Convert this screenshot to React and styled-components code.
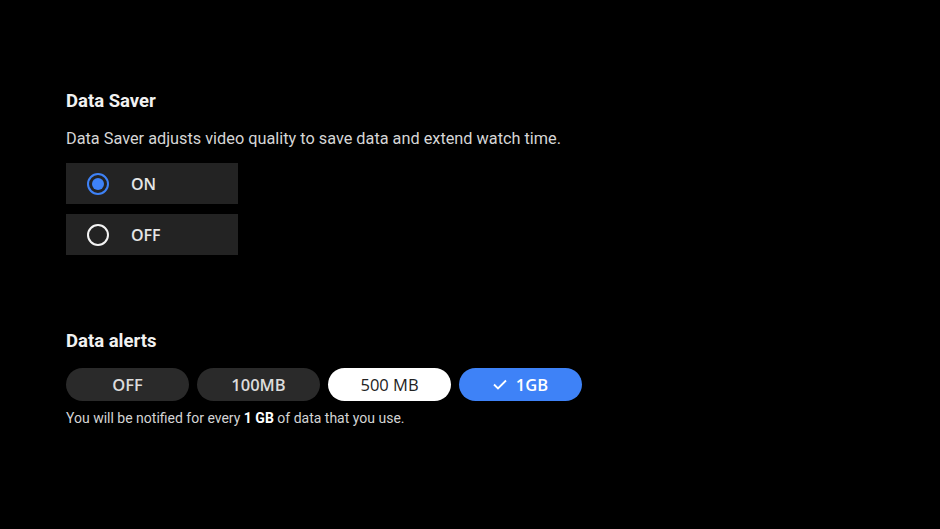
import React from 'react';
import styled, { createGlobalStyle } from 'styled-components';

const GlobalStyle = createGlobalStyle`
  html, body {
    margin: 0;
    padding: 0;
    background: #000;
  }
  body {
    font-family: Roboto, "Noto Sans", sans-serif;
    -webkit-font-smoothing: antialiased;
  }
`;

const Page = styled.div`
  width: 940px;
  height: 529px;
  background: #000;
  padding: 90px 0 0 66px;
  box-sizing: border-box;
  display: flex;
  flex-direction: column;
`;

const Section = styled.section`
  display: flex;
  flex-direction: column;
  margin-bottom: ${(p) => p.$gap || 0}px;
`;

const Title = styled.h2`
  margin: 0;
  font-family: Roboto, sans-serif;
  font-weight: 700;
  font-size: 18.5px;
  line-height: 22px;
  color: #f1f1f1;
`;

const Description = styled.p`
  margin: 17px 0 14px;
  font-size: 16.3px;
  line-height: 20px;
  color: #d6d6d6;
`;

const RadioList = styled.div`
  display: flex;
  flex-direction: column;
  gap: 10px;
`;

const RadioRow = styled.div`
  display: flex;
  align-items: center;
  width: 172px;
  height: 41px;
  background: #232323;
  padding-left: 21px;
  box-sizing: border-box;
`;

const RadioCircle = styled.span`
  width: 22px;
  height: 22px;
  border-radius: 50%;
  box-sizing: border-box;
  border: 2.5px solid ${(p) => (p.$checked ? '#3e82f7' : '#f4f4f4')};
  display: flex;
  align-items: center;
  justify-content: center;
  &::after {
    content: '';
    display: ${(p) => (p.$checked ? 'block' : 'none')};
    width: 12px;
    height: 12px;
    border-radius: 50%;
    background: #3e82f7;
  }
`;

const RadioLabel = styled.span`
  margin-left: 22px;
  font-family: "Open Sans", sans-serif;
  font-weight: 600;
  font-size: 16px;
  color: #e6e6e6;
`;

const PillRow = styled.div`
  display: flex;
  gap: 8px;
  margin-top: 16px;
`;

const Pill = styled.button`
  width: 123px;
  height: 33px;
  border: none;
  border-radius: 17px;
  padding: 0;
  display: flex;
  align-items: center;
  justify-content: center;
  gap: 9px;
  font-family: "Open Sans", sans-serif;
  font-size: 16.5px;
  font-weight: ${(p) => (p.$variant === 'light' ? 500 : 600)};
  background: ${(p) =>
    p.$variant === 'light' ? '#ffffff' : p.$variant === 'active' ? '#3e82f7' : '#2a2a2a'};
  color: ${(p) =>
    p.$variant === 'light' ? '#222' : p.$variant === 'active' ? '#fff' : '#dcdcdc'};
`;

const Note = styled.p`
  margin: 8px 0 0;
  font-size: 14px;
  line-height: 18px;
  color: #d4d4d4;
  b {
    color: #fff;
    font-weight: 700;
  }
`;

const radioItems = [
  { label: 'ON', checked: true },
  { label: 'OFF', checked: false },
];

const pills = [
  { label: 'OFF', variant: 'dark' },
  { label: '100MB', variant: 'dark' },
  { label: '500 MB', variant: 'light' },
  { label: '1GB', variant: 'active' },
];

export default function App() {
  return (
    <>
      <GlobalStyle />
      <Page>
        <Section $gap={75}>
          <Title>Data Saver</Title>
          <Description>Data Saver adjusts video quality to save data and extend watch time.</Description>
          <RadioList>
            {radioItems.map((item) => (
              <RadioRow key={item.label}>
                <RadioCircle $checked={item.checked} />
                <RadioLabel>{item.label}</RadioLabel>
              </RadioRow>
            ))}
          </RadioList>
        </Section>
        <Section>
          <Title>Data alerts</Title>
          <PillRow>
            {pills.map((p) => (
              <Pill key={p.label} $variant={p.variant}>
                {p.variant === 'active' && (
                  <svg width="14" height="11" viewBox="0 0 14 11">
                    <path d="M1 5.5 L5 9.5 L13 1.5" fill="none" stroke="#fff" strokeWidth="1.8" />
                  </svg>
                )}
                {p.label}
              </Pill>
            ))}
          </PillRow>
          <Note>
            You will be notified for every <b>1 GB</b> of data that you use.
          </Note>
        </Section>
      </Page>
    </>
  );
}
